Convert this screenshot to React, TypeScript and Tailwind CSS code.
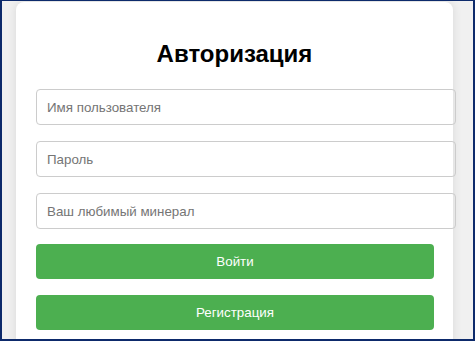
import React from "react";

export default function App() {
  const font = { fontFamily: '"Liberation Sans", Arial, sans-serif' };
  return (
    <div
      className="w-[475px] h-[341px] overflow-hidden border-t border-l-2 border-r-2 border-b-2 border-[#0d2a6b] bg-[#f0f0f0]"
      style={font}
    >
      <div className="ml-[14px] mt-[1px] w-[437px] h-[400px] bg-white rounded-[8px] shadow-[0_0_10px_rgba(0,0,0,0.1)] px-5 pt-[38px]">
        <h2 className="h-[28px] leading-[28px] text-[24px] font-bold text-black text-center">
          Авторизация
        </h2>
        <div className="mt-[21px] flex flex-col gap-4">
          {["Имя пользователя", "Пароль", "Ваш любимый минерал"].map((p) => (
            <input
              key={p}
              placeholder={p}
              className="w-[420px] h-[36px] px-[10px] border border-[#ccc] rounded-[4px] text-[13.33px] placeholder:text-[#757575] outline-none"
              style={font}
            />
          ))}
        </div>
        <div className="mt-[15px] flex flex-col gap-4">
          {["Войти", "Регистрация"].map((b) => (
            <button
              key={b}
              className="w-[398px] h-[35px] bg-[#4caf50] text-white rounded-[4px] text-[13.33px]"
              style={font}
            >
              {b}
            </button>
          ))}
        </div>
      </div>
    </div>
  );
}
